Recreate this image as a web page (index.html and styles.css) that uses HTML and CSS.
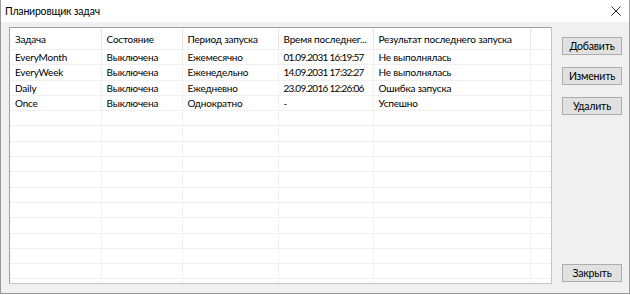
FILE: index.html
```html
<!DOCTYPE html>
<html lang="ru">
<head>
<meta charset="utf-8">
<title>Планировщик задач</title>
<link rel="stylesheet" href="styles.css">
</head>
<body>
<div class="window">
  <div class="titlebar">
    <span class="title">Планировщик задач</span>
    <svg class="close" width="10" height="10" viewBox="0 0 10 10"><path d="M0.5 0.5 L9.5 9.5 M9.5 0.5 L0.5 9.5" stroke="#222" stroke-width="1" fill="none"/></svg>
  </div>
  <div class="body">
    <div class="list">
      <table class="grid">
        <colgroup>
          <col class="c1"><col class="c2"><col class="c3"><col class="c4"><col class="c5"><col class="c6">
        </colgroup>
        <thead>
          <tr><th>Задача</th><th>Состояние</th><th>Период запуска</th><th>Время последнег...</th><th>Результат последнего запуска</th><th></th></tr>
        </thead>
        <tbody>
          <tr><td>EveryMonth</td><td>Выключена</td><td>Ежемесячно</td><td class="date">01.09.2031 16:19:57</td><td>Не выполнялась</td><td></td></tr>
          <tr><td>EveryWeek</td><td>Выключена</td><td>Еженедельно</td><td class="date">14.09.2031 17:32:27</td><td>Не выполнялась</td><td></td></tr>
          <tr><td>Daily</td><td>Выключена</td><td>Ежедневно</td><td class="date">23.09.2016 12:26:06</td><td>Ошибка запуска</td><td></td></tr>
          <tr><td>Once</td><td>Выключена</td><td>Однократно</td><td class="date">-</td><td>Успешно</td><td></td></tr>
          <tr><td></td><td></td><td></td><td></td><td></td><td></td></tr>
          <tr><td></td><td></td><td></td><td></td><td></td><td></td></tr>
          <tr><td></td><td></td><td></td><td></td><td></td><td></td></tr>
          <tr><td></td><td></td><td></td><td></td><td></td><td></td></tr>
          <tr><td></td><td></td><td></td><td></td><td></td><td></td></tr>
          <tr><td></td><td></td><td></td><td></td><td></td><td></td></tr>
          <tr><td></td><td></td><td></td><td></td><td></td><td></td></tr>
          <tr><td></td><td></td><td></td><td></td><td></td><td></td></tr>
          <tr><td></td><td></td><td></td><td></td><td></td><td></td></tr>
          <tr><td></td><td></td><td></td><td></td><td></td><td></td></tr>
          <tr><td></td><td></td><td></td><td></td><td></td><td></td></tr>
          <tr><td></td><td></td><td></td><td></td><td></td><td></td></tr>
        </tbody>
      </table>
    </div>
    <div class="buttons">
      <button class="btn">Добавить</button>
      <button class="btn">Изменить</button>
      <button class="btn">Удалить</button>
      <div class="spacer"></div>
      <button class="btn btn-close">Закрыть</button>
    </div>
  </div>
</div>
</body>
</html>
```
FILE: styles.css
```css
html, body {
  margin: 0;
  padding: 0;
  background: #ffffff;
}
body {
  font-family: Lato, "Noto Sans", sans-serif;
  font-size: 10px;
  letter-spacing: -0.2px;
  color: #000;
}
.window {
  width: 630px;
  height: 294px;
  box-sizing: border-box;
  border: 1px solid #9a9a9a;
  border-top: none;
  background: #f0f0f0;
  display: flex;
  flex-direction: column;
  overflow: hidden;
}
.titlebar {
  flex: 0 0 22px;
  height: 22px;
  background: #ffffff;
  display: flex;
  align-items: center;
  justify-content: space-between;
  padding: 0 8px 0 4px;
}
.title {
  font-size: 10.5px;
}
.close {
  display: block;
}
.body {
  flex: 1 1 auto;
  min-height: 0;
  display: flex;
  padding: 5px 0 9px 8px;
  gap: 10px;
}
.list {
  flex: 0 0 auto;
  width: 541px;
  border: 1px solid #a0a0a0;
  border-right-color: #c4c4c4;
  border-bottom-color: #c4c4c4;
  background: #fff;
  overflow: hidden;
}
.grid {
  border-collapse: collapse;
  table-layout: fixed;
  width: 541px;
}
.c1 { width: 91px; }
.c2 { width: 81px; }
.c3 { width: 96px; }
.c4 { width: 95px; }
.c5 { width: 157px; }
.c6 { width: 21px; }
.grid th {
  height: 21px;
  font-weight: normal;
  text-align: left;
  padding: 0 0 0 5px;
  border-right: 1px solid #e5e5e5;
  border-bottom: 1px solid #f0f0f0;
  white-space: nowrap;
  overflow: hidden;
}
.grid td {
  height: 14.3px;
  padding: 0 0 0 5px;
  border-right: 1px solid #f0f0f0;
  border-bottom: 1px solid #f0f0f0;
  white-space: nowrap;
  overflow: hidden;
  line-height: 14px;
}
.grid td.date {
  letter-spacing: -0.7px;
}
.grid th:last-child, .grid td:last-child {
  border-right: none;
}
.buttons {
  display: flex;
  flex-direction: column;
  padding-top: 10px;
  gap: 12px;
}
.spacer {
  flex: 1;
}
.btn {
  flex: 0 0 18px;
  width: 60px;
  height: 18px;
  padding: 0;
  margin: 0;
  font-family: inherit;
  font-size: 10.5px;
  letter-spacing: -0.2px;
  color: #000;
  background: #e1e1e1;
  border: 1px solid #adadad;
  border-radius: 0;
}
.btn-close {
  margin-bottom: 2px;
}
```
